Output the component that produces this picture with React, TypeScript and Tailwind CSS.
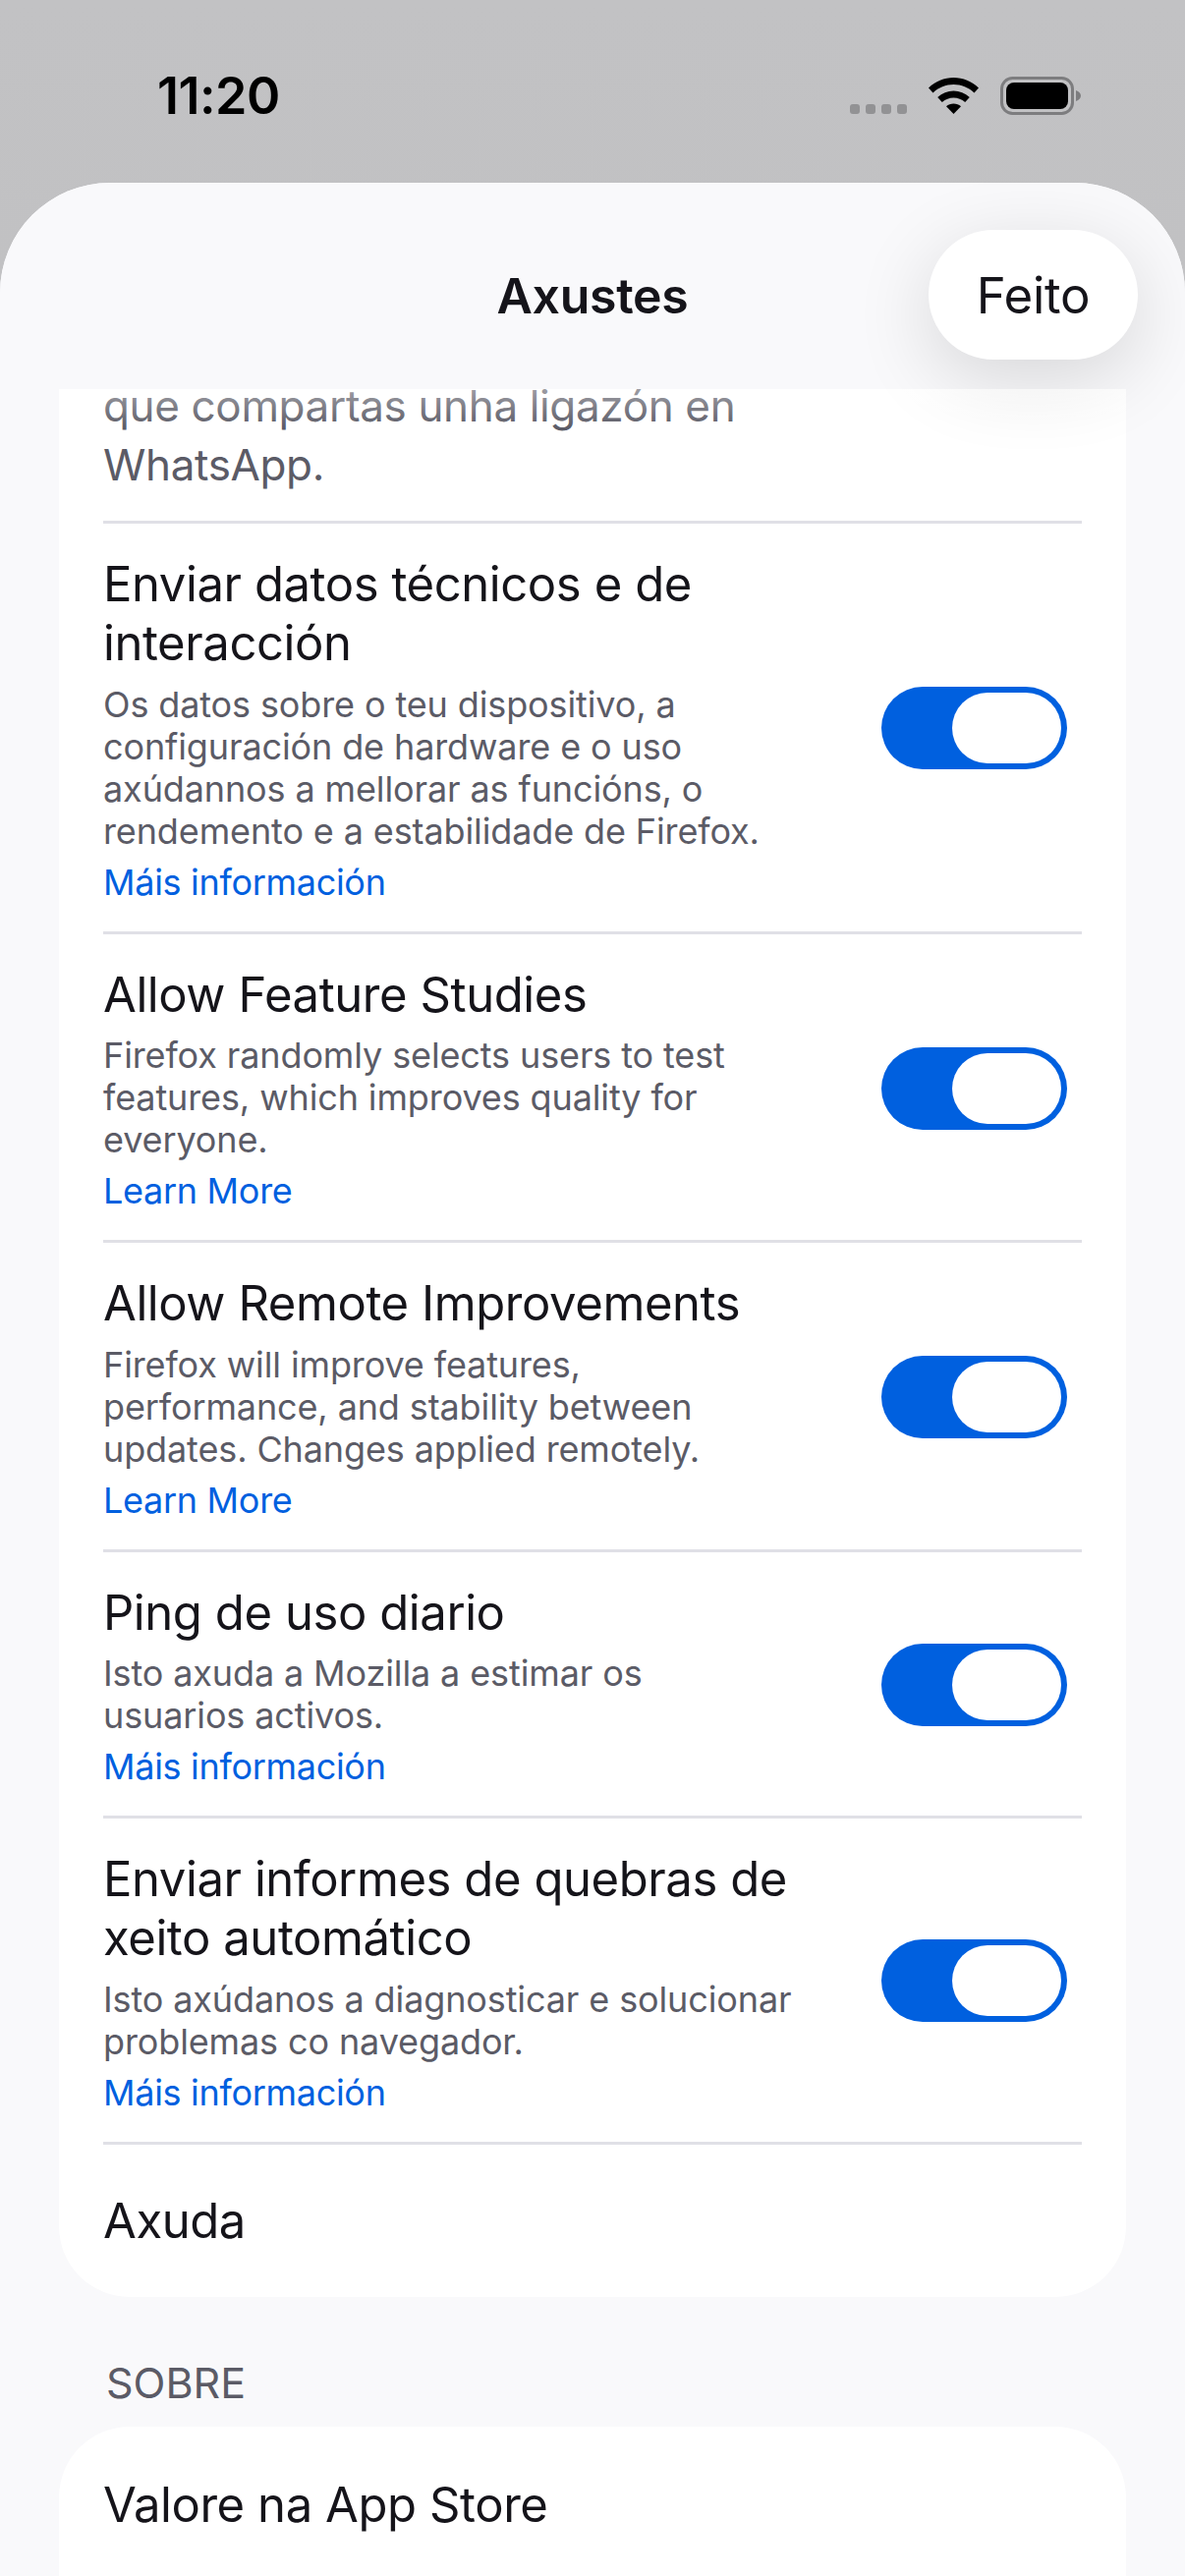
const font = "font-['Inter','Liberation_Sans',sans-serif]";

type Row = {
  title: string[];
  desc: string[];
  link: string;
};

const ROWS: Row[] = [
  {
    title: ['Enviar datos técnicos e de', 'interacción'],
    desc: [
      'Os datos sobre o teu dispositivo, a',
      'configuración de hardware e o uso',
      'axúdannos a mellorar as funcións, o',
      'rendemento e a estabilidade de Firefox.',
    ],
    link: 'Máis información',
  },
  {
    title: ['Allow Feature Studies'],
    desc: ['Firefox randomly selects users to test', 'features, which improves quality for', 'everyone.'],
    link: 'Learn More',
  },
  {
    title: ['Allow Remote Improvements'],
    desc: ['Firefox will improve features,', 'performance, and stability between', 'updates. Changes applied remotely.'],
    link: 'Learn More',
  },
  {
    title: ['Ping de uso diario'],
    desc: ['Isto axuda a Mozilla a estimar os', 'usuarios activos.'],
    link: 'Máis información',
  },
  {
    title: ['Enviar informes de quebras de', 'xeito automático'],
    desc: ['Isto axúdanos a diagnosticar e solucionar', 'problemas co navegador.'],
    link: 'Máis información',
  },
];

function StatusBar() {
  return (
    <div className="flex h-[186px] items-start justify-between pl-[160px] pr-[106px]">
      <span className="mt-[68px] text-[52px] leading-[60px] font-semibold tracking-[-0.5px] text-black">11:20</span>
      <div className="mt-[78px] flex items-start">
        <div className="mt-[28px] flex gap-[6px]">
          {[0, 1, 2, 3].map((i) => (
            <div key={i} className="h-[10px] w-[10px] rounded-[3px] bg-[#929294]" />
          ))}
        </div>
        <svg className="ml-[22px] mt-px" width="51" height="37" viewBox="0 0 51 37">
          <path d="M25.5 0C35 0 44 3.6 51 10.5L46.5 15.5C40.8 10 33.4 7 25.5 7S10.2 10 4.5 15.5L0 10.5C7 3.6 16 0 25.5 0Z" fill="#000" />
          <path d="M25.5 13.5C31.6 13.5 37.2 15.8 41.8 20L37.2 25C33.8 22 29.8 20.4 25.5 20.4S17.2 22 13.8 25L9.2 20C13.8 15.8 19.4 13.5 25.5 13.5Z" fill="#000" />
          <path d="M25.5 26.5C28.4 26.5 31 27.5 33 29.3L25.5 37L18 29.3C20 27.5 22.6 26.5 25.5 26.5Z" fill="#000" />
        </svg>
        <svg className="ml-[22px]" width="82" height="39" viewBox="0 0 82 39">
          <rect x="1.5" y="1.5" width="72" height="36" rx="11" fill="none" stroke="#7d7d7f" strokeWidth="3" />
          <rect x="6" y="6" width="63" height="27" rx="8" fill="#000" />
          <path d="M77 14C80 15 82 17 82 19.5S80 24 77 25Z" fill="#7d7d7f" />
        </svg>
      </div>
    </div>
  );
}

function Toggle() {
  return (
    <div className="mb-[2px] flex h-[84px] w-[189px] shrink-0 justify-end rounded-full bg-[#0060df] p-[6px]">
      <div className="h-[72px] w-[111px] rounded-full bg-white" />
    </div>
  );
}

function SettingRow({ row }: { row: Row }) {
  return (
    <div className="flex items-center justify-between border-t-[3px] border-[#e0e0e6] pt-[32px] pb-[28px] pr-[15px]">
      <div>
        <div className="text-[49px] leading-[60.4px] tracking-[-0.42px] text-[#15141a]">
          {row.title.map((t) => (
            <div key={t}>{t}</div>
          ))}
        </div>
        <div className="mt-[10px] text-[36px] leading-[43px] tracking-[-0.12px] text-[#5b5b66]">
          {row.desc.map((d) => (
            <div key={d}>{d}</div>
          ))}
        </div>
        <div className="mt-[8px] text-[36px] leading-[44px] tracking-[-0.3px] text-[#0060df]">{row.link}</div>
      </div>
      <Toggle />
    </div>
  );
}

export default function App() {
  return (
    <div className={`${font} h-[2622px] w-[1206px] overflow-hidden bg-linear-to-b from-[#c2c2c4] to-[#b9b9b9]`}>
      <StatusBar />
      <div className="h-[2436px] overflow-hidden rounded-t-[112px] bg-[#f9f9fb]">
        <div className="relative z-10 flex h-[210px] items-center justify-center bg-[#f9f9fb]">
          <span className="mt-[20px] text-[50px] font-semibold tracking-[-0.3px] text-[#15141a]">Axustes</span>
          <div className="absolute right-[48px] top-[48px] flex h-[132px] w-[213px] items-center justify-center rounded-full bg-white pt-[2px] text-[51px] tracking-[-0.3px] text-[#15141a] shadow-[0_20px_80px_rgba(0,0,0,0.14)]">
            Feito
          </div>
          <div className="absolute inset-x-[60px] top-full h-[40px] bg-linear-to-b from-[#ffffff66] to-[#ffffff00]" />
        </div>

        <div className="mx-[60px]">
          <div className="overflow-hidden rounded-b-[72px] bg-white px-[45px]">
            <div className="mt-[-13px] pb-[27px] text-[44px] leading-[60px] tracking-[-0.35px] text-[#5b5b66]">
              <div>que compartas unha ligazón en</div>
              <div>WhatsApp.</div>
            </div>
            {ROWS.map((row) => (
              <SettingRow key={row.title[0]} row={row} />
            ))}
            <div className="flex h-[158px] items-center border-t-[3px] border-[#e0e0e6] text-[49px] tracking-[-0.42px] text-[#15141a]">
              Axuda
            </div>
          </div>

          <div className="mt-[62px] pl-[48px] text-[43px] leading-[50px] text-[#5b5b66]">SOBRE</div>
          <div className="mt-[20px] h-[300px] rounded-t-[72px] bg-white px-[45px]">
            <div className="flex h-[160px] items-center text-[49px] tracking-[-0.42px] text-[#15141a]">Valore na App Store</div>
          </div>
        </div>
      </div>
    </div>
  );
}
